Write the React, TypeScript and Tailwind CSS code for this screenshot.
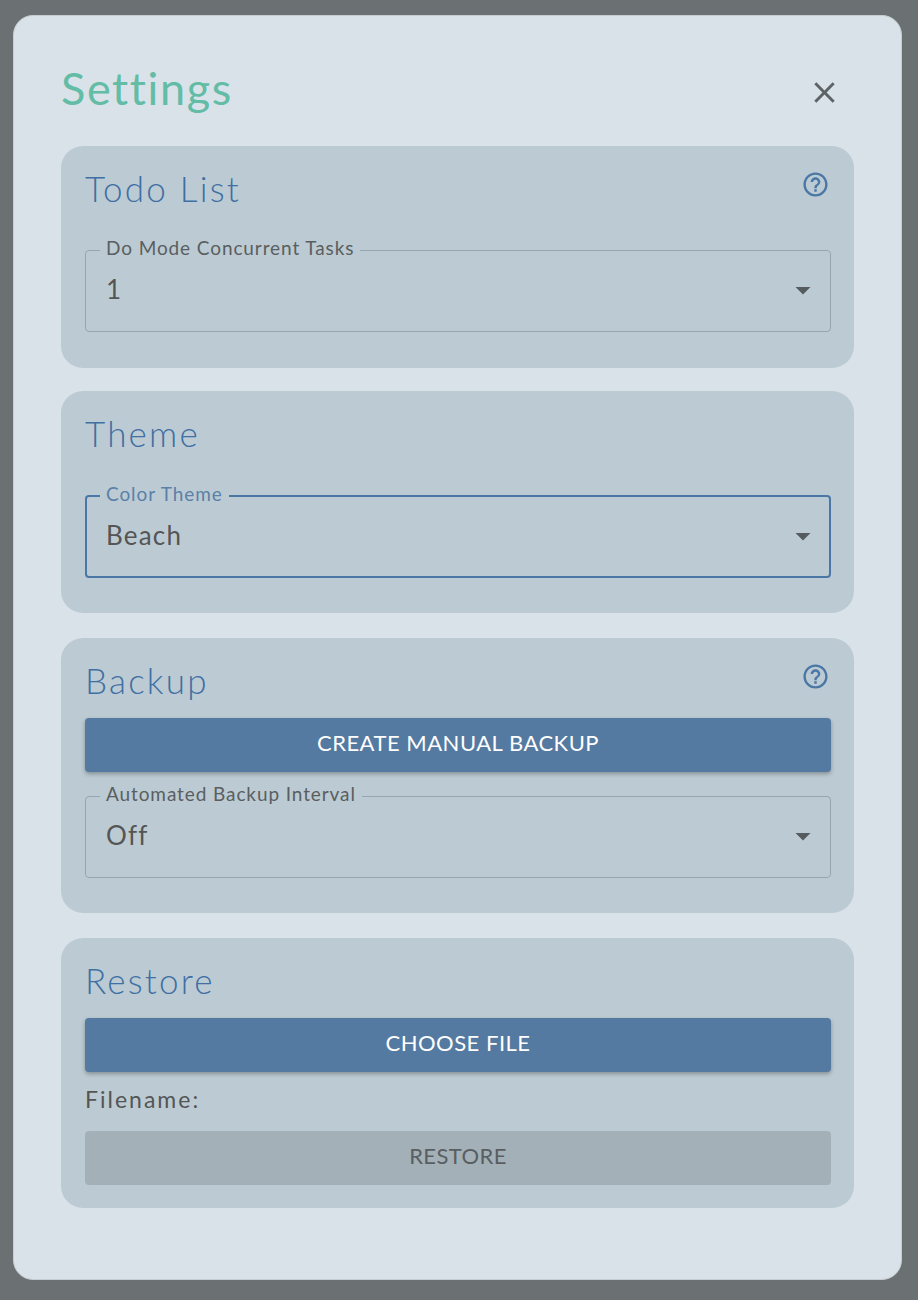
const font = 'font-["Lato","Open_Sans",sans-serif]'

function HelpIcon() {
  return (
    <svg viewBox="0 0 24 24" className="h-[29px] w-[29px] fill-[#4b77a6]">
      <path d="M11 18h2v-2h-2v2zm1-16C6.48 2 2 6.48 2 12s4.48 10 10 10 10-4.48 10-10S17.52 2 12 2zm0 18c-4.41 0-8-3.59-8-8s3.59-8 8-8 8 3.59 8 8-3.59 8-8 8zm0-14c-2.21 0-4 1.79-4 4h2c0-1.1.9-2 2-2s2 .9 2 2c0 2-3 1.75-3 5h2c0-2.25 3-2.5 3-5 0-2.21-1.79-4-4-4z" />
    </svg>
  )
}

function SelectBox({ label, value, focused }: { label: string; value: string; focused?: boolean }) {
  return (
    <fieldset
      className={
        focused
          ? 'h-[92px] rounded border-2 border-[#4a77a5] pl-[19px] pr-[8px]'
          : 'h-[92px] rounded border border-[#96a6b0] pl-[20px] pr-[9px]'
      }
    >
      <legend
        className={
          focused
            ? 'ml-[-6px] h-5 px-[6px] text-[19px] leading-[16px] tracking-[0.9px] text-[#5b80a8]'
            : 'ml-[-6px] h-5 px-[6px] text-[19px] leading-[16px] tracking-[0.9px] text-[#5a5e60]'
        }
      >
        {label}
      </legend>
      <div className="flex h-[60px] items-center justify-between">
        <span className="pb-[2px] text-[26px] tracking-[1.2px] text-[#555]">{value}</span>
        <svg viewBox="0 0 24 24" className="h-9 w-9 fill-[#555b5e]">
          <path d="M7 10l5 5 5-5z" />
        </svg>
      </div>
    </fieldset>
  )
}

function Button({ children }: { children: React.ReactNode }) {
  return (
    <button className="h-[54px] w-full rounded bg-[#547aa1] pb-[6px] text-[22px] tracking-[0.5px] text-white shadow-[0_2px_4px_rgba(0,0,0,0.3)]">
      {children}
    </button>
  )
}

function Heading({ children, help }: { children: React.ReactNode; help?: boolean }) {
  return (
    <div className="flex items-start justify-between">
      <h2 className="text-[35px] font-light leading-[44px] tracking-[2.2px] text-[#3f6fa3]">{children}</h2>
      {help && (
        <div className="mr-[1px] mt-[4px]">
          <HelpIcon />
        </div>
      )}
    </div>
  )
}

export default function App() {
  return (
    <div className={`${font} h-[1300px] overflow-hidden bg-[#6b7073] pl-[13px] pr-4 pt-[15px]`}>
      <div className="h-[1265px] rounded-[20px] border border-[#c5cdd2] bg-[#d9e2e8] px-[47px]">
        {/* 제목 */}
        <div className="flex h-[130px] items-start justify-between">
          <h1 className="mt-[44px] text-[45px] leading-[56px] tracking-[1.6px] text-[#62bca6]">Settings</h1>
          <button className="mr-[12px] mt-[59px]">
            <svg viewBox="0 0 24 24" className="h-[35px] w-[35px] fill-[#5c6265]">
              <path d="M19 6.41 17.59 5 12 10.59 6.41 5 5 6.41 10.59 12 5 17.59 6.41 19 12 13.41 17.59 19 19 17.59 13.41 12z" />
            </svg>
          </button>
        </div>

        <div className="flex flex-col gap-6">
          <section className="h-[222px] rounded-[22px] bg-[#bccbd3] pl-6 pr-[23px] pt-5">
            <Heading help>Todo List</Heading>
            <div className="mt-[30px]">
              <SelectBox label="Do Mode Concurrent Tasks" value="1" />
            </div>
          </section>

          <section className="mb-px -mt-px h-[222px] rounded-[22px] bg-[#bccbd3] pl-6 pr-[23px] pt-5">
            <Heading>Theme</Heading>
            <div className="mt-[31px]">
              <SelectBox label="Color Theme" value="Beach" focused />
            </div>
          </section>

          <section className="mb-px h-[275px] rounded-[22px] bg-[#bccbd3] pl-6 pr-[23px] pt-5">
            <Heading help>Backup</Heading>
            <div className="mt-4">
              <Button>CREATE MANUAL BACKUP</Button>
            </div>
            <div className="mt-[14px]">
              <SelectBox label="Automated Backup Interval" value="Off" />
            </div>
          </section>

          <section className="h-[270px] rounded-[22px] bg-[#bccbd3] pl-6 pr-[23px] pt-5">
            <Heading>Restore</Heading>
            <div className="mt-4">
              <Button>CHOOSE FILE</Button>
            </div>
            <div className="mt-3 text-[23px] leading-[30px] tracking-[2px] text-[#555]">Filename:</div>
            <button className="mt-[17px] h-[54px] w-full rounded bg-[#a3b0b8] pb-[6px] text-[22px] tracking-[0.4px] text-[#5a5e60]">RESTORE</button>
          </section>
        </div>
      </div>
    </div>
  )
}
